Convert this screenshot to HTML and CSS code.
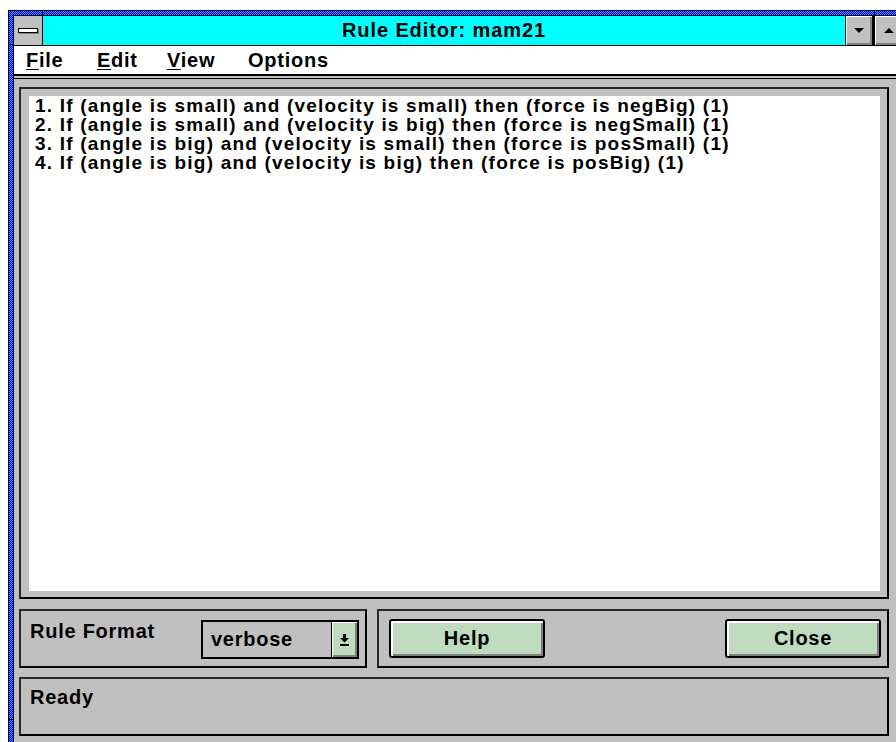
FILE: index.html
```html
<!DOCTYPE html>
<html lang="en">
<head>
<meta charset="utf-8">
<title>Rule Editor: mam21</title>
<link rel="stylesheet" href="styles.css">
</head>
<body>
<div class="window">
  <span class="tick tick-top-left"></span>
  <span class="tick tick-top-right"></span>
  <span class="tick tick-left-top"></span>
  <span class="tick tick-left-bottom"></span>
  <div class="inner">
    <div class="titlebar">
      <div class="sysmenu"><span class="sysbar"></span></div>
      <div class="title">Rule Editor: mam21</div>
      <div class="tbtn tbtn-min">
        <svg width="10" height="5" viewBox="0 0 10 5"><polygon points="0,0 10,0 5,5" fill="#000"/></svg>
      </div>
      <div class="tbtn tbtn-max">
        <svg width="10" height="5" viewBox="0 0 10 5"><polygon points="0,5 10,5 5,0" fill="#000"/></svg>
      </div>
    </div>
    <div class="menubar">
      <span class="menu-item m-file"><u>F</u>ile</span>
      <span class="menu-item m-edit"><u>E</u>dit</span>
      <span class="menu-item m-view"><u>V</u>iew</span>
      <span class="menu-item m-options">Options</span>
    </div>
    <div class="client">
      <div class="group rules">
        <div class="rulelist">
          <div class="rule">1. If (angle is small) and (velocity is small) then (force is negBig) (1)</div>
          <div class="rule">2. If (angle is small) and (velocity is big) then (force is negSmall) (1)</div>
          <div class="rule">3. If (angle is big) and (velocity is small) then (force is posSmall) (1)</div>
          <div class="rule">4. If (angle is big) and (velocity is big) then (force is posBig) (1)</div>
        </div>
      </div>
      <div class="row">
        <div class="group format">
          <span class="label">Rule Format</span>
          <div class="combo">
            <span class="combo-value">verbose</span>
            <span class="combo-btn">
              <svg width="9" height="13" viewBox="0 0 9 13"><path d="M3 1h3v4h3l-4.5 4.5L0 5h3z M0 11h9v2H0z" fill="#000"/></svg>
            </span>
          </div>
        </div>
        <div class="group actions">
          <button class="btn">Help</button>
          <button class="btn">Close</button>
        </div>
      </div>
      <div class="group status">Ready</div>
    </div>
  </div>
</div>
</body>
</html>
```

FILE: styles.css
```css
html, body {
  margin: 0;
  padding: 0;
}

body {
  width: 896px;
  height: 742px;
  overflow: hidden;
  background: #fff;
  font-family: "Liberation Sans", Arial, sans-serif;
  font-weight: bold;
  color: #000;
}

/* window frame with the dithered blue sizing border */
.window {
  position: relative;
  margin: 10px 0 0 8px;
  width: 900px;
  height: 743px;
  box-sizing: border-box;
  border: 1px solid #000;
  padding: 4px;
  background: repeating-conic-gradient(#0000f0 0 25%, #3c9cff 0 50%) 0 0 / 2px 2px;
}

.tick {
  position: absolute;
  background: #000;
}
.tick-top-left { left: 33px; top: -1px; width: 1px; height: 5px; }
.tick-top-right { left: 865px; top: -1px; width: 1px; height: 5px; }
.tick-left-top { left: -1px; top: 33px; width: 5px; height: 1px; }
.tick-left-bottom { left: -1px; top: 708px; width: 5px; height: 1px; }

.inner {
  height: 100%;
  box-sizing: border-box;
  border: 1px solid #000;
  background: #c0c0c0;
  display: flex;
  flex-direction: column;
}

/* caption */
.titlebar {
  display: flex;
  height: 29px;
  background: #00ffff;
  border-bottom: 1px solid #000;
}

.sysmenu {
  width: 28px;
  background: #c0c0c0;
  border-right: 1px solid #000;
  display: flex;
  align-items: center;
  justify-content: center;
}

.sysbar {
  width: 18px;
  height: 3px;
  background: #fff;
  border: 1px solid #000;
  box-shadow: 1px 1px 0 #808080;
}

.title {
  flex: 1;
  text-align: center;
  font-size: 20px;
  line-height: 29px;
  letter-spacing: 0.9px;
}

.tbtn {
  width: 26px;
  border-left: 1px solid #000;
  background: #c0c0c0;
  box-shadow: inset 1px 1px 0 #fff, inset -2px -2px 0 #808080;
  display: flex;
  align-items: center;
  justify-content: center;
}

.tbtn-max {
  width: 27px;
  border-left-width: 3px;
}

/* menu */
.menubar {
  display: flex;
  height: 28px;
  background: #fff;
  border-bottom: 2px solid #000;
  padding-left: 12px;
  font-size: 20px;
  line-height: 28px;
  letter-spacing: 0.75px;
}

.menu-item u {
  text-decoration-thickness: 1px;
  text-underline-offset: 2px;
}

.m-file { width: 71px; }
.m-edit { width: 70px; }
.m-view { width: 81px; }

/* dialog body */
.client {
  flex: 1;
  margin-top: 2px;
  border-top: 1px solid #000;
  padding: 8px 0 0 5px;
  font-size: 20px;
  letter-spacing: 0.75px;
}

.group {
  box-sizing: border-box;
  border: 2px solid #000;
  border-color: #2a2a2a #000 #000 #2a2a2a;
}

.rules {
  width: 870px;
  height: 512px;
  padding: 7px 7px 6px 8px;
}

.rulelist {
  height: 100%;
  box-sizing: border-box;
  background: #fff;
  padding: 0 6px;
  font-size: 19px;
  letter-spacing: 1.2px;
  line-height: 19px;
}

.rule {
  white-space: nowrap;
}

.row {
  display: flex;
  gap: 10px;
  margin-top: 10px;
}

.format {
  width: 348px;
  height: 59px;
  display: flex;
  justify-content: space-between;
  align-items: flex-start;
  padding: 9px 6px 0 9px;
}

.label {
  line-height: 19px;
  margin-top: 2px;
}

.combo {
  width: 158px;
  height: 39px;
  box-sizing: border-box;
  border: 2px solid #000;
  display: flex;
  background: #c0c0c0;
}

.combo-value {
  flex: 1;
  padding-left: 8px;
  line-height: 35px;
}

.combo-btn {
  width: 25px;
  border-left: 1px solid #000;
  background: #c0dcc0;
  box-shadow: inset 1px 1px 0 #fff, inset -2px -2px 0 #808080;
  display: flex;
  align-items: center;
  justify-content: center;
}

.actions {
  width: 512px;
  height: 59px;
  display: flex;
  justify-content: space-between;
  align-items: flex-start;
  padding: 8px 6px 0 10px;
}

.btn {
  width: 156px;
  height: 39px;
  box-sizing: border-box;
  border: 2px solid #000;
  border-radius: 3px;
  background: #c0dcc0;
  box-shadow: inset 2px 2px 0 #fff, inset -2px -2px 0 #808080;
  font-family: inherit;
  font-weight: bold;
  font-size: 20px;
  letter-spacing: 0.75px;
  color: #000;
  padding: 0;
}

.status {
  width: 870px;
  height: 59px;
  margin-top: 9px;
  padding: 9px 9px;
  line-height: 19px;
}
```
